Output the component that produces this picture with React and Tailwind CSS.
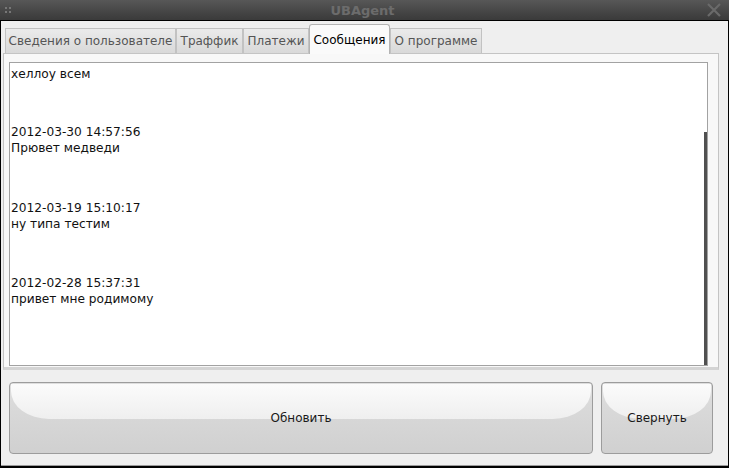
import React from 'react';

const tabs = [
  { label: 'Сведения о пользователе', w: 'w-[171px]' },
  { label: 'Траффик', w: 'w-[67px]' },
  { label: 'Платежи', w: 'w-[66px]' },
  { label: 'Сообщения', w: 'w-[81px]', active: true },
  { label: 'О программе', w: 'w-[92px]' },
];

const messages = [
  { date: '2012-03-30 14:57:56', text: 'Прювет медведи', gap: 'mt-[42px]' },
  { date: '2012-03-19 15:10:17', text: 'ну типа тестим', gap: 'mt-[44px]' },
  { date: '2012-02-28 15:37:31', text: 'привет мне родимому', gap: 'mt-[43px]' },
];

function GlossButton({ label, className }) {
  return (
    <button
      className={`grid h-[72px] rounded-[4px] border border-[#9c9c9c] bg-gradient-to-b from-[#dedede] to-[#d0d0d0] overflow-hidden ${className}`}
    >
      <div className="[grid-area:1/1] self-start mx-[1px] mt-[1px] h-[35px] rounded-bl-[38px_28px] rounded-br-[38px_28px] bg-gradient-to-b from-[#fbfbfb] to-[#efefef]" />
      <span className="[grid-area:1/1] self-center justify-self-center text-[12px] text-[#1a1a1a]">
        {label}
      </span>
    </button>
  );
}

export default function App() {
  return (
    <div className="w-[729px] h-[468px] flex flex-col bg-black font-['DejaVu_Sans',sans-serif]">
      {/* Title bar */}
      <div className="h-[21px] flex items-center bg-gradient-to-b from-[#575757] to-[#3a3a3a] border-b border-black px-[5px]">
        <div className="grid grid-cols-2 gap-[2px] w-[6px]">
          <span className="w-[2px] h-[2px] bg-[#777]" />
          <span className="w-[2px] h-[2px] bg-[#777]" />
          <span className="w-[2px] h-[2px] bg-[#777]" />
          <span className="w-[2px] h-[2px] bg-[#777]" />
        </div>
        <div className="flex-1 text-center text-[13px] font-bold text-[#6c6c6c] leading-none pl-[8px]">UBAgent</div>
        <svg width="16" height="16" viewBox="0 0 16 16" className="mr-[2px]">
          <path d="M2 2 L14 14 M14 2 L2 14" stroke="#6a6a6a" strokeWidth="2.2" />
        </svg>
      </div>

      {/* Window body */}
      <div className="flex-1 flex flex-col mx-[1px] mb-[2px] bg-[#efefef] border-b border-[#9a9a9a]">
        {/* Tabs */}
        <div className="flex items-end h-[29px] pl-[4px] mt-[3px]">
          {tabs.map((t) =>
            t.active ? (
              <div
                key={t.label}
                className={`${t.w} h-[30px] -mb-[1px] z-10 flex items-center justify-center bg-[#fafafa] border border-b-0 border-[#b4b4b4] rounded-t-[3px] text-[12px] text-black`}
              >
                {t.label}
              </div>
            ) : (
              <div
                key={t.label}
                className={`${t.w} h-[25px] flex items-center justify-center bg-gradient-to-b from-[#ebebeb] to-[#d9d9d9] border border-b-0 border-[#c2c2c2] text-[12px] text-[#555]`}
              >
                {t.label}
              </div>
            )
          )}
        </div>

        {/* Tab pane */}
        <div className="ml-[2px] w-[716px] h-[317px] bg-[#f8f8f8] border border-[#c4c4c4] border-b-[3px] border-b-[#d4d4d4] pt-[8px] pl-[5px]">
          <div className="relative w-[699px] h-[304px] bg-white border border-[#a2a2a2] text-[12.2px] text-[#111] leading-[16px] pl-[1px]">
            <div className="mt-[3px]">хеллоу всем</div>
            {messages.map((m) => (
              <div key={m.date} className={m.gap}>
                <div>{m.date}</div>
                <div>{m.text}</div>
              </div>
            ))}
            <div className="absolute right-[0px] top-[69px] bottom-0 w-[3px] bg-[#505050]" />
          </div>
        </div>

        {/* Buttons */}
        <div className="flex gap-[8px] pl-[8px] mt-[12px]">
          <GlossButton label="Обновить" className="w-[584px]" />
          <GlossButton label="Свернуть" className="w-[112px]" />
        </div>
      </div>
    </div>
  );
}
